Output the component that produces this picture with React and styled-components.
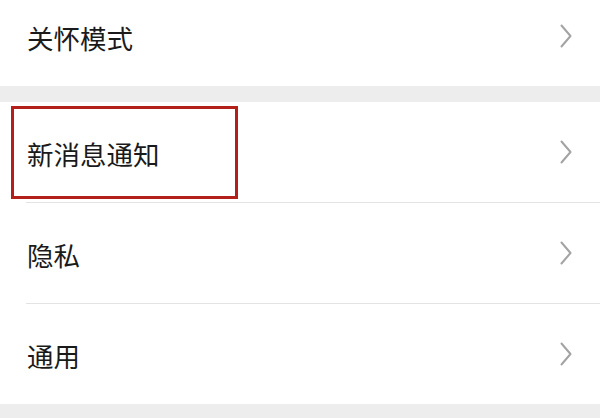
import React from "react";
import styled, { createGlobalStyle } from "styled-components";

const GlobalStyle = createGlobalStyle`
  html, body {
    margin: 0;
    padding: 0;
    background: #ededed;
    font-family: "Noto Sans CJK SC", "Noto Sans", sans-serif;
  }
`;

const Page = styled.div`
  width: 600px;
  height: 418px;
  overflow: hidden;
  background: #ededed;
`;

const Group = styled.div`
  background: #ffffff;
  margin-top: ${(p) => p.$offset || 0}px;
  margin-bottom: ${(p) => p.$gap || 0}px;
`;

const Row = styled.div`
  position: relative;
  height: 100px;
  display: flex;
  align-items: center;
  justify-content: space-between;
  padding: 0 28px 0 27px;
  box-sizing: border-box;
`;

const Label = styled.span`
  font-size: 26.5px;
  color: #1a1a1a;
  line-height: 1;
  padding-top: 5px;
`;

const Divider = styled.div`
  height: 1px;
  margin-left: 26px;
  background: #e3e3e3;
`;

const Highlight = styled.div`
  position: absolute;
  left: 11px;
  top: 4px;
  width: 227px;
  height: 93px;
  border: 3px solid #b32019;
  box-sizing: border-box;
  pointer-events: none;
`;

const Chevron = () => (
  <svg width="12" height="24" viewBox="0 0 12 24">
    <polyline
      points="1.5,1.5 10.5,12 1.5,22.5"
      fill="none"
      stroke="#a3a3a3"
      strokeWidth="2"
      strokeLinecap="round"
      strokeLinejoin="round"
    />
  </svg>
);

const Item = ({ label, highlight }) => (
  <Row>
    <Label>{label}</Label>
    <Chevron />
    {highlight && <Highlight />}
  </Row>
);

export default function App() {
  return (
    <Page>
      <GlobalStyle />
      <Group $offset={-14} $gap={16}>
        <Item label="关怀模式" />
      </Group>
      <Group>
        <Item label="新消息通知" highlight />
        <Divider />
        <Item label="隐私" />
        <Divider />
        <Item label="通用" />
      </Group>
    </Page>
  );
}
